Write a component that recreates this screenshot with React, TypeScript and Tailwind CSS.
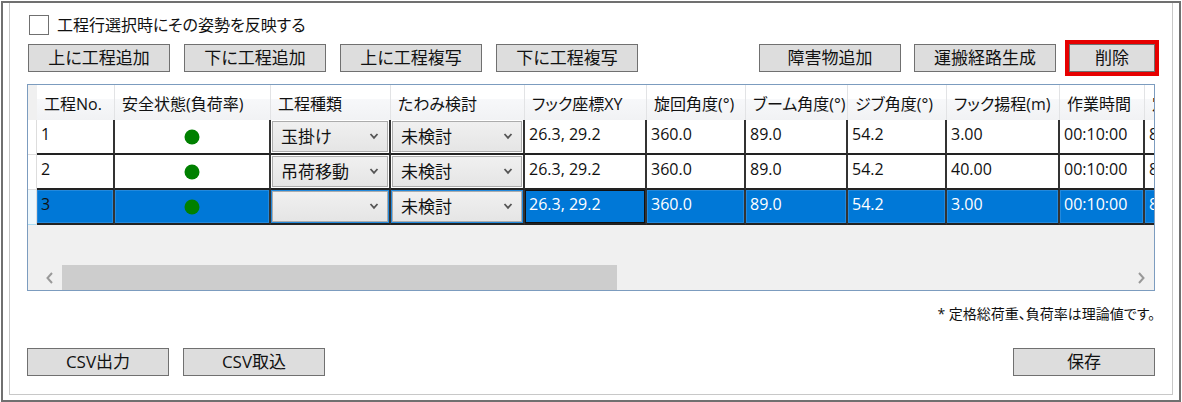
import React, { useState } from "react";

type Process = {
  kind: string;
  deflection: string;
  hookXY: string;
  swing: string;
  boom: string;
  jib: string;
  lift: string;
  time: string;
  load: string;
};

const columns = [
  { label: "工程No.", width: "w-[78px]" },
  { label: "安全状態(負荷率)", width: "w-[156px]" },
  { label: "工程種類", width: "w-[120px]" },
  { label: "たわみ検討", width: "w-[134px]" },
  { label: "フック座標XY", width: "w-[122px]" },
  { label: "旋回角度(°)", width: "w-[99px]" },
  { label: "ブーム角度(°)", width: "w-[102px]" },
  { label: "ジブ角度(°)", width: "w-[99px]" },
  { label: "フック揚程(m)", width: "w-[113px]" },
  { label: "作業時間", width: "w-[85px]" },
  { label: "定格総荷重", width: "w-[110px]" },
];

const processes: Process[] = [
  { kind: "玉掛け", deflection: "未検討", hookXY: "26.3, 29.2", swing: "360.0", boom: "89.0", jib: "54.2", lift: "3.00", time: "00:10:00", load: "8.00" },
  { kind: "吊荷移動", deflection: "未検討", hookXY: "26.3, 29.2", swing: "360.0", boom: "89.0", jib: "54.2", lift: "40.00", time: "00:10:00", load: "8.00" },
  { kind: "", deflection: "未検討", hookXY: "26.3, 29.2", swing: "360.0", boom: "89.0", jib: "54.2", lift: "3.00", time: "00:10:00", load: "8.00" },
];

function Button({ children, className = "w-[142px]" }: { children: React.ReactNode; className?: string }) {
  return (
    <button
      type="button"
      className={`h-7 shrink-0 border border-[#707070] bg-[#dddddd] text-[17px] leading-[26px] whitespace-nowrap text-[#111] ${className}`}
    >
      {children}
    </button>
  );
}

function Combo({ label, value, options }: { label: string; value: string; options: string[] }) {
  const [current, setCurrent] = useState(value);
  return (
    <div className="relative">
      <select
        aria-label={label}
        value={current}
        onChange={(e) => setCurrent(e.target.value)}
        className="block h-[31px] w-full appearance-none border border-[#acacac] bg-linear-to-b from-[#f0f0f0] to-[#e5e5e5] pl-2 text-[17px] leading-[29px] text-[#111]"
      >
        {options.map((o) => (
          <option key={o} value={o}>
            {o}
          </option>
        ))}
      </select>
      <svg viewBox="0 0 10 7" className="pointer-events-none absolute top-3 right-[9px] h-[7px] w-[10px]" fill="none" stroke="#555" strokeWidth="1.8">
        <path d="M1.5 1L5 4.8 8.5 1" />
      </svg>
    </div>
  );
}

function Row({ index, data, selected }: { index: number; data: Process; selected: boolean }) {
  const line = "h-[35px] border-r-2 border-b-2 border-r-[#333] border-b-[#222] p-0";
  const fill = selected ? "bg-[#0078d7] shadow-[inset_0_0_0_1px_#2389dc]" : "bg-white";
  const text = selected ? "text-white" : "text-[#111]";
  const values = [data.swing, data.boom, data.jib, data.lift, data.time, data.load];
  return (
    <tr>
      <td className={`border-r border-b border-r-[#ddd] p-0 ${selected ? "border-b-[#a8dcf5] bg-[#eef8fd]" : "border-b-[#ddd] bg-white"}`} />
      <td className={`${line} ${fill} pl-1 align-top leading-7 text-[#111]`}>{index}</td>
      <td className={`${line} ${fill}`}>
        <svg viewBox="0 0 16 16" className="mx-auto size-4" role="img" aria-label="安全">
          <circle cx="8" cy="8" r="7.5" fill="#008000" />
        </svg>
      </td>
      <td className={`${line} ${fill} pr-px pl-px`}>
        <Combo label="工程種類" value={data.kind} options={["", "玉掛け", "吊荷移動"]} />
      </td>
      <td className={`${line} ${fill} pr-px pl-px`}>
        <Combo label="たわみ検討" value={data.deflection} options={["未検討"]} />
      </td>
      <td className={`${line} pl-1 align-top leading-7 ${text} ${selected ? "bg-[#0078d7] shadow-[inset_0_0_0_1px_#111]" : "bg-white"}`}>{data.hookXY}</td>
      {values.map((v, i) => (
        <td key={i} className={`${line} ${fill} pl-1 align-top leading-7 ${text}`}>
          {v}
        </td>
      ))}
    </tr>
  );
}

export default function App() {
  return (
    <div className="bg-white p-px font-['Open_Sans','Noto_Sans_CJK_JP',sans-serif] text-[16px] text-[#111] [font-feature-settings:'palt']">
      <main className="border-2 border-[#707070] px-[6px] pb-[5px]">
        <div className="border-x border-b border-[#c8c8c8] px-[17px] pt-[10px] pb-[18px]">
          <label className="flex h-6 w-fit items-center gap-2 pl-[2px]">
            <input type="checkbox" className="size-5 appearance-none border border-[#707070] bg-white checked:bg-[#0078d7]" />
            工程行選択時にその姿勢を反映する
          </label>

          <div className="mt-[7px] flex items-center justify-between pl-px">
            <div className="flex gap-[14px]">
              <Button>上に工程追加</Button>
              <Button>下に工程追加</Button>
              <Button>上に工程複写</Button>
              <Button>下に工程複写</Button>
            </div>
            <div className="flex gap-[13px]">
              <Button>障害物追加</Button>
              <Button>運搬経路生成</Button>
              <Button className="w-[86px] outline-4 outline-[#e60000]">削除</Button>
            </div>
          </div>

          <div className="mt-3 border border-[#7c9cbf] bg-[#f0f0f0]">
            <div className="overflow-hidden">
              <table className="w-[1227px] table-fixed border-separate border-spacing-0">
                <thead>
                  <tr className="h-[35px]">
                    <th className="w-[9px] bg-[#f0f0f0] p-0" aria-label="行" />
                    {columns.map((c) => (
                      <th
                        key={c.label}
                        className={`${c.width} border-r border-[#e2e3e5] bg-linear-to-b from-white from-40% via-[#f7f8fa] via-41% to-[#f1f2f4] pt-[2px] pr-0 pb-0 pl-[7px] text-left leading-6 font-normal whitespace-nowrap`}
                      >
                        {c.label}
                      </th>
                    ))}
                  </tr>
                </thead>
                <tbody>
                  {processes.map((p, i) => (
                    <Row key={i} index={i + 1} data={p} selected={i === 2} />
                  ))}
                </tbody>
              </table>
            </div>
            <div className="mt-10 flex h-[25px] items-stretch">
              <button type="button" aria-label="左へスクロール" className="flex w-[34px] shrink-0 items-center justify-end pr-[9px]">
                <svg viewBox="0 0 8 12" className="h-3 w-2" fill="none" stroke="#999" strokeWidth="2">
                  <path d="M7 1L2.5 6 7 11" />
                </svg>
              </button>
              <div className="flex-1">
                <div className="h-full w-[52%] bg-[#cdcdcd]" />
              </div>
              <button type="button" aria-label="右へスクロール" className="flex w-[25px] shrink-0 items-center justify-center">
                <svg viewBox="0 0 8 12" className="h-3 w-2" fill="none" stroke="#999" strokeWidth="2">
                  <path d="M1 1l4.5 5L1 11" />
                </svg>
              </button>
            </div>
          </div>

          <p className="mt-[11px] text-right text-[14px] leading-6">* 定格総荷重、負荷率は理論値です。</p>

          <div className="mt-[22px] flex justify-between">
            <div className="flex gap-[14px]">
              <Button>CSV出力</Button>
              <Button>CSV取込</Button>
            </div>
            <Button>保存</Button>
          </div>
        </div>
      </main>
    </div>
  );
}
